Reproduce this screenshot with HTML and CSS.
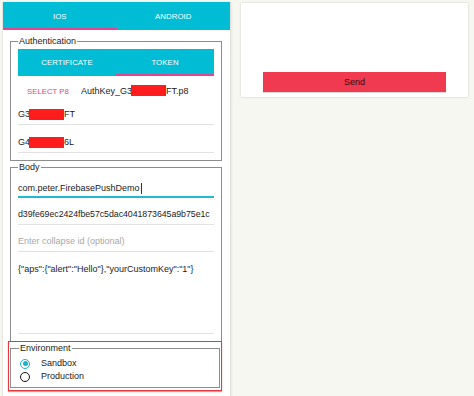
FILE: index.html
```html
<!DOCTYPE html>
<html>
<head>
<meta charset="utf-8">
<link rel="stylesheet" href="styles.css">
</head>
<body>
<div class="app">
  <div class="left">
    <div class="tabs main-tabs">
      <div class="tab active">IOS</div>
      <div class="tab">ANDROID</div>
    </div>
    <fieldset class="group auth">
      <legend>Authentication</legend>
      <div class="tabs sub-tabs">
        <div class="tab">CERTIFICATE</div>
        <div class="tab active">TOKEN</div>
      </div>
      <div class="file-row"><span class="select">SELECT P8</span><span class="file-name">AuthKey_G3<span class="redact"></span>FT.p8</span></div>
      <div class="field">G3<span class="redact"></span>FT</div>
      <div class="field gap-lg">G4<span class="redact"></span>6L</div>
    </fieldset>
    <fieldset class="group body-group">
      <legend>Body</legend>
      <div class="field focused">com.peter.FirebasePushDemo<span class="caret"></span></div>
      <div class="field token">d39fe69ec2424fbe57c5dac4041873645a9b75e1c</div>
      <div class="field placeholder">Enter collapse id (optional)</div>
      <div class="field textarea">{"aps":{"alert":"Hello"},"yourCustomKey":"1"}</div>
    </fieldset>
    <div class="highlight">
      <fieldset class="group env">
        <legend>Environment</legend>
        <div class="radio-row"><span class="radio checked"></span><span>Sandbox</span></div>
        <div class="radio-row"><span class="radio"></span><span>Production</span></div>
      </fieldset>
    </div>
  </div>
  <div class="right">
    <div class="card">
      <button class="send">Send</button>
    </div>
  </div>
</div>
</body>
</html>
```

FILE: styles.css
```css
* { box-sizing: border-box; }
html, body {
  margin: 0;
  padding: 0;
  background: #f7f7f2;
  font-family: "Liberation Sans", Arial, Helvetica, sans-serif;
  color: #222;
  font-size: 9px;
  line-height: 11px;
}
.app {
  display: flex;
  align-items: stretch;
  min-height: 100vh;
  padding: 2px 0 0 2px;
}
.left {
  width: 229px;
  background: #fff;
  border-left: 1px solid #e6e6e1;
  border-right: 1px solid #e2e2dd;
  box-shadow: 1px 0 2px rgba(0,0,0,0.06);
  padding-bottom: 10px;
}
.tabs {
  display: flex;
  background: #00bcd4;
}
.tab {
  flex: 1;
  display: flex;
  align-items: center;
  justify-content: center;
  color: #fff;
  font-size: 7.8px;
  letter-spacing: 0.1px;
  border-bottom: 2px solid transparent;
}
.tab.active { border-bottom-color: #e3458e; }
.main-tabs { height: 28px; }
.main-tabs .tab { padding-top: 2px; }
.sub-tabs { height: 27px; }
.sub-tabs .tab { padding-top: 2px; }

.group {
  border: 1px solid #8d8d8d;
  margin: 0 8px 0 7px;
  padding: 2px 7px 7px;
  min-width: 0;
}
.group legend {
  padding: 0 1px;
  font-size: 9px;
  line-height: 11px;
  color: #222;
}
.auth { margin-top: 6px; }

.file-row {
  display: flex;
  align-items: center;
  height: 20px;
  margin-top: 5px;
  padding-left: 9px;
}
.select {
  color: #e8457f;
  font-size: 7.8px;
  margin-right: 12px;
}
.redact {
  display: inline-block;
  width: 35px;
  height: 11px;
  vertical-align: -2px;
  background: #ff1c1c;
  margin-left: -1px;
}
.field {
  height: 20px;
  margin-top: 4px;
  border-bottom: 1px solid #e2e2e2;
  display: flex;
  align-items: center;
  white-space: nowrap;
}
.gap-lg { margin-top: 8px; }

.body-group { margin-top: 1px; padding-top: 5px; }
.body-group .field { margin-top: 7px; }
.body-group .field:first-of-type { margin-top: 0; }
.field.focused {
  border-bottom: 2px solid #24b9d3;
  padding-top: 2px;
}
.field.token { font-size: 8.8px; letter-spacing: -0.05px; }
.caret {
  display: inline-block;
  width: 1px;
  height: 11px;
  background: #333;
  margin-left: 1px;
}
.field.placeholder { color: #a9a9a9; }
.field.textarea {
  height: 75px;
  align-items: flex-start;
  padding-top: 5px;
}

.highlight {
  position: relative;
  margin: -1px 8px 0 5px;
  background: #fff;
  border: 1px solid #e8383f;
  box-shadow: 0 1px 1px rgba(215,80,90,0.6);
  padding: 0 0 2px 0;
}
.env {
  margin: 1px 1px 0 1px;
  padding: 3px 8px 4px;
}
.radio-row {
  display: flex;
  align-items: center;
  height: 13px;
  font-size: 9px;
}
.radio {
  width: 10px;
  height: 10px;
  border-radius: 50%;
  border: 1.3px solid #111;
  margin-left: 1px;
  margin-right: 11px;
  display: flex;
  align-items: center;
  justify-content: center;
}
.radio.checked { border-color: #1ab3cf; }
.radio.checked::after {
  content: "";
  width: 5px;
  height: 5px;
  border-radius: 50%;
  background: #1ab3cf;
}

.right {
  margin-left: 10px;
  width: 227px;
}
.card {
  margin-top: 1px;
  height: 94px;
  background: #fff;
  box-shadow: 0 0 2px rgba(0,0,0,0.18);
  display: flex;
  align-items: flex-end;
  padding: 0 22px 5px;
}
.send {
  width: 100%;
  height: 20px;
  border: none;
  background: #f03a4f;
  color: #3a0b12;
  font-family: "Liberation Sans", Arial, sans-serif;
  font-size: 9px;
  padding: 0;
  box-shadow: 0 1px 1px rgba(0,0,0,0.15);
}
```
